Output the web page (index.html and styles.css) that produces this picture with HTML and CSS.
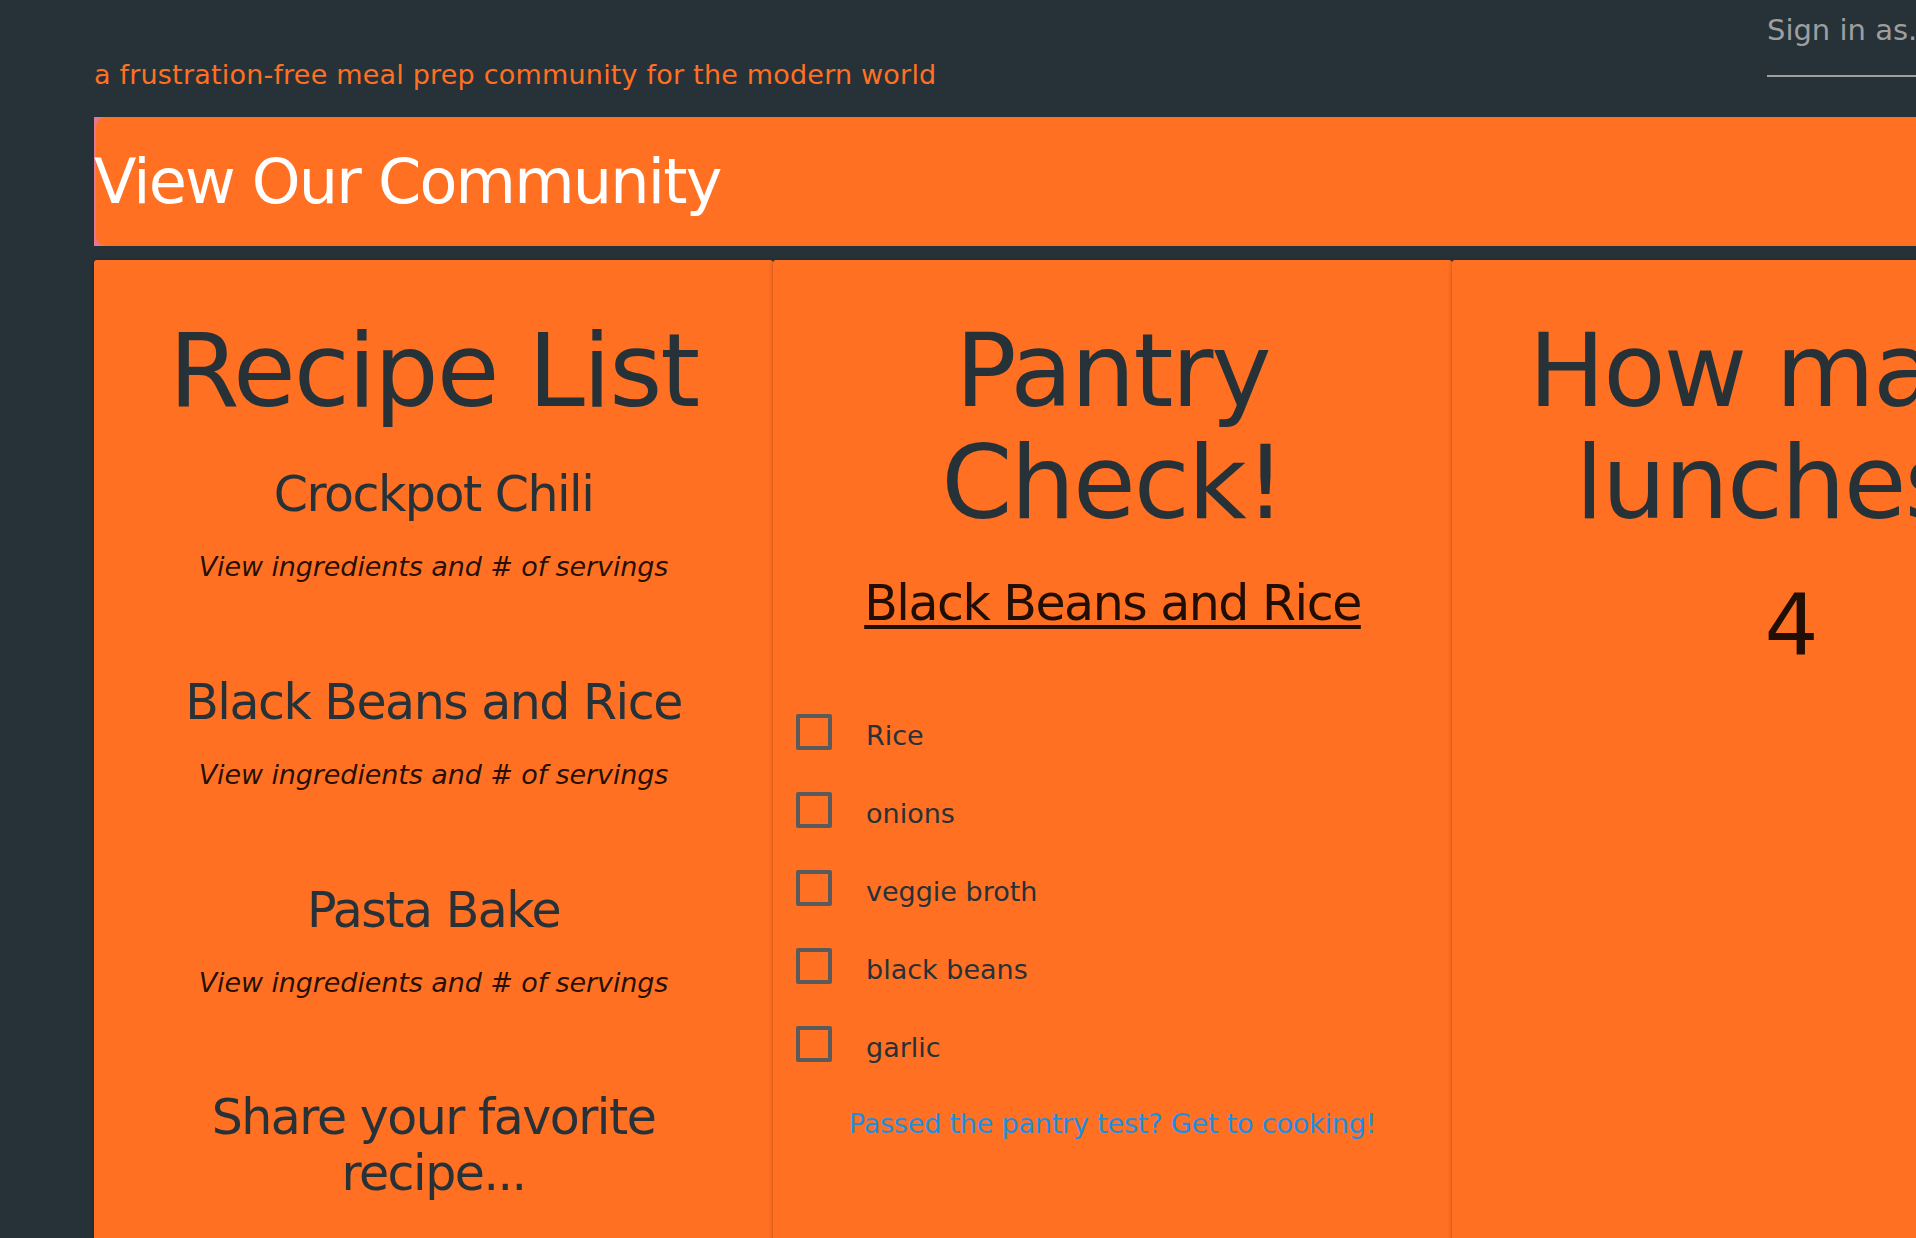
FILE: index.html
```html
<!DOCTYPE html>
<html lang="en">
<head>
<meta charset="utf-8">
<title>View Our Community</title>
<link rel="stylesheet" href="styles.css">
</head>
<body>
<div class="page">
  <header class="topbar">
    <p class="tagline">a frustration-free meal prep community for the modern world</p>
    <div class="signin">Sign in as...</div>
  </header>
  <div class="banner">
    <div class="banner-inner">
      <h1 class="banner-title">View Our Community</h1>
    </div>
  </div>
  <main class="cards">
    <section class="card">
      <h2 class="card-title">Recipe List</h2>
      <ul class="recipes">
        <li class="recipe">
          <h3 class="recipe-name">Crockpot Chili</h3>
          <p class="recipe-link">View ingredients and # of servings</p>
        </li>
        <li class="recipe">
          <h3 class="recipe-name">Black Beans and Rice</h3>
          <p class="recipe-link">View ingredients and # of servings</p>
        </li>
        <li class="recipe">
          <h3 class="recipe-name">Pasta Bake</h3>
          <p class="recipe-link">View ingredients and # of servings</p>
        </li>
      </ul>
      <h3 class="share">Share your favorite recipe...</h3>
    </section>
    <section class="card">
      <h2 class="card-title">Pantry Check!</h2>
      <h3 class="pantry-recipe"><a href="#">Black Beans and Rice</a></h3>
      <ul class="checklist">
        <li class="check-row"><input type="checkbox" class="check-box"><span class="check-label">Rice</span></li>
        <li class="check-row"><input type="checkbox" class="check-box"><span class="check-label">onions</span></li>
        <li class="check-row"><input type="checkbox" class="check-box"><span class="check-label">veggie broth</span></li>
        <li class="check-row"><input type="checkbox" class="check-box"><span class="check-label">black beans</span></li>
        <li class="check-row"><input type="checkbox" class="check-box"><span class="check-label">garlic</span></li>
      </ul>
      <p class="cook"><a href="#" class="cook-link">Passed the pantry test? Get to cooking!</a></p>
    </section>
    <section class="card">
      <h2 class="card-title">How many lunches?</h2>
      <p class="count">4</p>
    </section>
  </main>
</div>
</body>
</html>
```

FILE: styles.css
```css
html, body {
  margin: 0;
  padding: 0;
  overflow: hidden;
  background: #263238;
}

body {
  font-family: "DejaVu Sans", "Liberation Sans", sans-serif;
}

.page {
  width: 2037px;
  padding-left: 94px;
}

.topbar {
  display: flex;
  justify-content: space-between;
  align-items: flex-start;
  height: 117px;
}

.tagline {
  margin: 58px 0 0;
  font-size: 27px;
  line-height: 34px;
  letter-spacing: 0.2px;
  color: #ff7022;
}

.signin {
  box-sizing: border-box;
  width: 364px;
  padding: 12px 0 27px;
  border-bottom: 2px solid #a0a0a0;
  font-size: 29px;
  line-height: 36px;
  color: #9e9e9e;
  white-space: nowrap;
  overflow: hidden;
}

.banner {
  background: #e5788f;
  padding-left: 2px;
}

.banner-inner {
  display: flex;
  align-items: center;
  height: 129px;
  background: #ff7022;
  border-radius: 10px;
}

.banner-title {
  margin: 0 0 0 -2px;
  font-size: 62px;
  font-weight: normal;
  line-height: 1;
  letter-spacing: -1.8px;
  color: #ffffff;
}

.cards {
  display: flex;
  margin-top: 14px;
}

.card {
  flex: 0 0 679px;
  box-sizing: border-box;
  min-height: 1000px;
  padding: 55px 23px 0;
  background: #ff7022;
  border-radius: 3px 3px 0 0;
  box-shadow: 0 2px 2px rgba(0, 0, 0, 0.14), 0 1px 5px rgba(0, 0, 0, 0.2);
  text-align: center;
  color: #263238;
}

.card-title {
  margin: 0;
  font-size: 102px;
  font-weight: normal;
  line-height: 112px;
  letter-spacing: -2px;
}

.recipes {
  list-style: none;
  margin: 34px 0 0;
  padding: 0;
  display: flex;
  flex-direction: column;
  gap: 85px;
}

.recipe-name {
  margin: 0;
  font-size: 49px;
  font-weight: normal;
  line-height: 68px;
  letter-spacing: -1.5px;
}

.recipe-link {
  margin: 21px 0 0;
  font-size: 27px;
  line-height: 34px;
  font-style: italic;
  letter-spacing: -0.1px;
  color: rgba(0, 0, 0, 0.87);
}

.share {
  margin: 90px 0 0;
  font-size: 49px;
  font-weight: normal;
  line-height: 56px;
  letter-spacing: -1.5px;
}

.pantry-recipe {
  margin: 31px 0 0;
  font-size: 49px;
  font-weight: normal;
  line-height: 68px;
  letter-spacing: -1.5px;
}

.pantry-recipe a {
  color: rgba(0, 0, 0, 0.87);
  text-decoration: underline;
  text-decoration-thickness: 4px;
  text-underline-offset: 5px;
}

.checklist {
  list-style: none;
  margin: 55px 0 0;
  padding: 0;
  text-align: left;
}

.check-row {
  display: flex;
  align-items: center;
  height: 78px;
}

.check-box {
  appearance: none;
  -webkit-appearance: none;
  flex: none;
  box-sizing: border-box;
  width: 36px;
  height: 36px;
  margin: 0;
  border: 4px solid #5a5a5a;
  border-radius: 2px;
  background: transparent;
}

.check-label {
  margin-left: 34px;
  padding-top: 7px;
  font-size: 27px;
  line-height: 34px;
  color: #263238;
}

.cook {
  margin: 24px 0 0;
  font-size: 27px;
  line-height: 34px;
}

.cook-link {
  color: #1d8fe3;
  text-decoration: none;
  letter-spacing: -0.2px;
}

.count {
  margin: 37px 0 0;
  font-size: 85px;
  line-height: 100px;
  color: rgba(0, 0, 0, 0.87);
}
```
